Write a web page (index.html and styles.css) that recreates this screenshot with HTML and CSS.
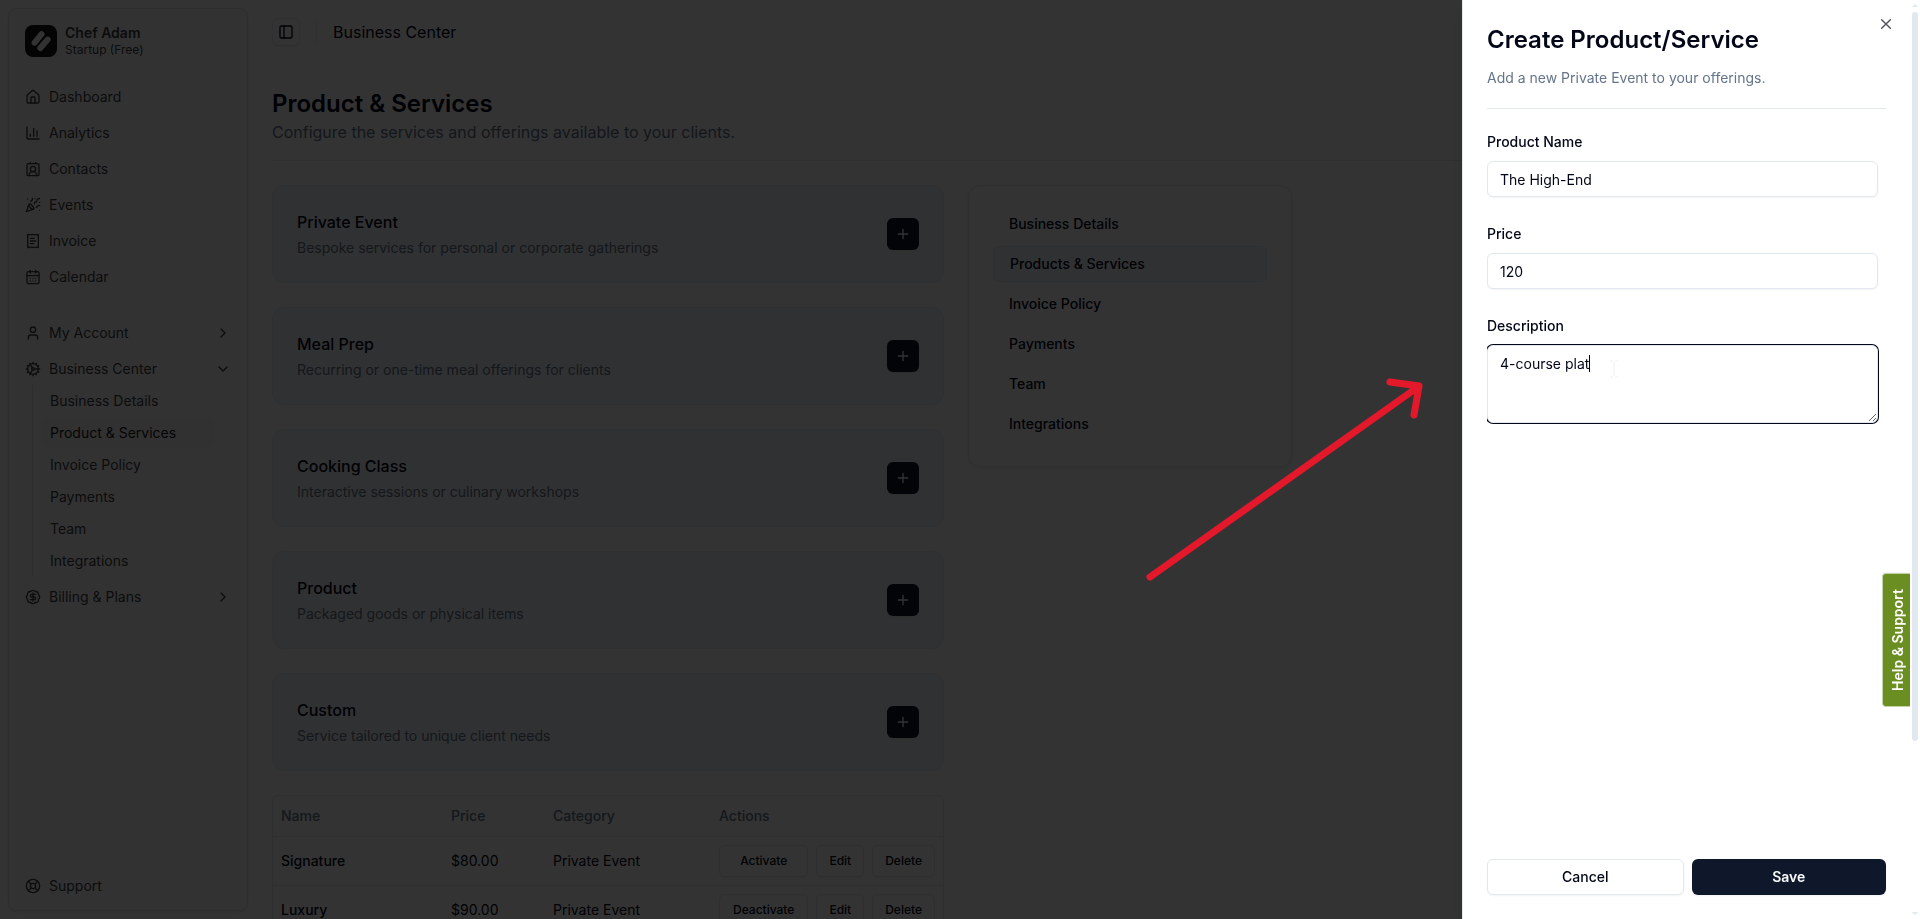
FILE: index.html
```html
<!DOCTYPE html>
<html lang="en">
<head>
    <meta charset="UTF-8">
    <meta name="viewport" content="width=device-width, initial-scale=1.0">
    <title>Business Center</title>
    <link rel="stylesheet" href="styles.css">
</head>
<body>

    <div class="app">
        <aside class="sidebar">
            <div class="brand">
                <svg class="logo" viewBox="0 0 32 32">
                    <rect width="32" height="32" rx="8" fill="#18181b"/>
                    <path d="M9.6 17.6 16.6 9.2M15.3 23l7.3-8.4" stroke="#fafafa" stroke-width="6" stroke-linecap="round"/>
                </svg>
                <div>
                    <div class="brand-name">Chef Adam</div>
                    <div class="brand-plan">Startup (Free)</div>
                </div>
            </div>

            <ul class="menu">
                <li><a href="#">
                    <svg class="icon" viewBox="0 0 24 24"><path d="M15 21v-8a1 1 0 0 0-1-1h-4a1 1 0 0 0-1 1v8"/><path d="M3 10a2 2 0 0 1 .709-1.528l7-5.999a2 2 0 0 1 2.582 0l7 5.999A2 2 0 0 1 21 10v9a2 2 0 0 1-2 2H5a2 2 0 0 1-2-2z"/></svg>
                    <span>Dashboard</span>
                </a></li>
                <li><a href="#">
                    <svg class="icon" viewBox="0 0 24 24"><path d="M3 3v16a2 2 0 0 0 2 2h16M18 17V9M13 17V5M8 17v-3"/></svg>
                    <span>Analytics</span>
                </a></li>
                <li><a href="#">
                    <svg class="icon" viewBox="0 0 24 24"><path d="M16 2v2M8 2v2M17.915 22a6 6 0 0 0-12 0"/><circle cx="12" cy="12" r="4"/><rect x="3" y="4" width="18" height="18" rx="2"/></svg>
                    <span>Contacts</span>
                </a></li>
                <li><a href="#">
                    <svg class="icon" viewBox="0 0 24 24"><path d="M5.8 11.3 2 22l10.7-3.79M4 3h.01M22 8h.01M15 2h.01M22 20h.01"/><path d="m22 2-2.24.75a2.9 2.9 0 0 0-1.96 3.12c.1.86-.57 1.63-1.45 1.63h-.38c-.86 0-1.6.6-1.76 1.44L14 10"/><path d="m22 13-.82-.33c-.86-.34-1.82.2-1.98 1.11c-.11.7-.72 1.22-1.43 1.22H17"/><path d="m11 2 .33.82c.34.86-.2 1.82-1.11 1.98C9.52 4.9 9 5.52 9 6.23V7"/><path d="M11 13c1.93 1.93 2.83 4.17 2 5-.83.83-3.07-.07-5-2-1.93-1.93-2.83-4.17-2-5 .83-.83 3.07.07 5 2Z"/></svg>
                    <span>Events</span>
                </a></li>
                <li><a href="#">
                    <svg class="icon" viewBox="0 0 24 24"><path d="M4 2v20l2-1 2 1 2-1 2 1 2-1 2 1 2-1 2 1V2l-2 1-2-1-2 1-2-1-2 1-2-1-2 1Z"/><path d="M14 8H8M16 12H8M13 16H8"/></svg>
                    <span>Invoice</span>
                </a></li>
                <li><a href="#">
                    <svg class="icon" viewBox="0 0 24 24"><path d="M8 2v4M16 2v4M3 10h18M8 14h.01M12 14h.01M16 14h.01M8 18h.01M12 18h.01M16 18h.01"/><rect x="3" y="4" width="18" height="18" rx="2"/></svg>
                    <span>Calendar</span>
                </a></li>
            </ul>

            <ul class="menu">
                <li><a href="#">
                    <svg class="icon" viewBox="0 0 24 24"><path d="M19 21v-2a4 4 0 0 0-4-4H9a4 4 0 0 0-4 4v2"/><circle cx="12" cy="7" r="4"/></svg>
                    <span>My Account</span>
                    <svg class="icon chevron" viewBox="0 0 24 24"><path d="m9 18 6-6-6-6"/></svg>
                </a></li>
                <li>
                    <a href="#">
                        <svg class="icon" viewBox="0 0 24 24"><circle cx="12" cy="12" r="8"/><circle cx="12" cy="12" r="2"/><path d="M12 2v2M12 22v-2M17 20.66l-1-1.73M11 10.27 7 3.34M20.66 17l-1.73-1M3.34 7l1.73 1M14 12h8M2 12h2M20.66 7l-1.73 1M3.34 17l1.73-1M17 3.34l-1 1.73M11 13.73l-4 6.93"/></svg>
                        <span>Business Center</span>
                        <svg class="icon chevron" viewBox="0 0 24 24"><path d="m6 9 6 6 6-6"/></svg>
                    </a>
                    <ul class="sub">
                        <li><a href="#">Business Details</a></li>
                        <li><a href="#" class="active">Product &amp; Services</a></li>
                        <li><a href="#">Invoice Policy</a></li>
                        <li><a href="#">Payments</a></li>
                        <li><a href="#">Team</a></li>
                        <li><a href="#">Integrations</a></li>
                    </ul>
                </li>
                <li><a href="#">
                    <svg class="icon" viewBox="0 0 24 24"><path d="M3.85 8.62a4 4 0 0 1 4.78-4.77 4 4 0 0 1 6.74 0 4 4 0 0 1 4.78 4.78 4 4 0 0 1 0 6.74 4 4 0 0 1-4.77 4.78 4 4 0 0 1-6.75 0 4 4 0 0 1-4.78-4.77 4 4 0 0 1 0-6.76Z"/><path d="M16 8h-6a2 2 0 1 0 0 4h4a2 2 0 1 1 0 4H8M12 18V6"/></svg>
                    <span>Billing &amp; Plans</span>
                    <svg class="icon chevron" viewBox="0 0 24 24"><path d="m9 18 6-6-6-6"/></svg>
                </a></li>
            </ul>

            <ul class="menu menu-bottom">
                <li><a href="#">
                    <svg class="icon" viewBox="0 0 24 24"><circle cx="12" cy="12" r="10"/><circle cx="12" cy="12" r="4"/><path d="m4.93 4.93 4.24 4.24M14.83 9.17l4.24-4.24M14.83 14.83l4.24 4.24M9.17 14.83l-4.24 4.24"/></svg>
                    <span>Support</span>
                </a></li>
            </ul>
        </aside>

        <main class="main">
            <header class="topbar">
                <button type="button" class="toggle" aria-label="Toggle sidebar">
                    <svg class="icon" viewBox="0 0 24 24"><rect x="3" y="3" width="18" height="18" rx="2"/><path d="M9 3v18"/></svg>
                </button>
                <span class="divider"></span>
                <span>Business Center</span>
            </header>

            <div class="heading">
                <h1>Product &amp; Services</h1>
                <p>Configure the services and offerings available to your clients.</p>
            </div>

            <div class="content">
                <div class="products">
                    <section class="card">
                        <div>
                            <h2>Private Event</h2>
                            <p>Bespoke services for personal or corporate gatherings</p>
                        </div>
                        <button type="button" class="add" aria-label="Add private event"><svg class="icon" viewBox="0 0 24 24"><path d="M5 12h14M12 5v14"/></svg></button>
                    </section>
                    <section class="card">
                        <div>
                            <h2>Meal Prep</h2>
                            <p>Recurring or one-time meal offerings for clients</p>
                        </div>
                        <button type="button" class="add" aria-label="Add meal prep"><svg class="icon" viewBox="0 0 24 24"><path d="M5 12h14M12 5v14"/></svg></button>
                    </section>
                    <section class="card">
                        <div>
                            <h2>Cooking Class</h2>
                            <p>Interactive sessions or culinary workshops</p>
                        </div>
                        <button type="button" class="add" aria-label="Add cooking class"><svg class="icon" viewBox="0 0 24 24"><path d="M5 12h14M12 5v14"/></svg></button>
                    </section>
                    <section class="card">
                        <div>
                            <h2>Product</h2>
                            <p>Packaged goods or physical items</p>
                        </div>
                        <button type="button" class="add" aria-label="Add product"><svg class="icon" viewBox="0 0 24 24"><path d="M5 12h14M12 5v14"/></svg></button>
                    </section>
                    <section class="card">
                        <div>
                            <h2>Custom</h2>
                            <p>Service tailored to unique client needs</p>
                        </div>
                        <button type="button" class="add" aria-label="Add custom"><svg class="icon" viewBox="0 0 24 24"><path d="M5 12h14M12 5v14"/></svg></button>
                    </section>

                    <div class="table-box">
                        <table>
                            <thead>
                                <tr>
                                    <th class="col-name">Name</th>
                                    <th class="col-price">Price</th>
                                    <th>Category</th>
                                    <th class="col-actions">Actions</th>
                                </tr>
                            </thead>
                            <tbody>
                                <tr>
                                    <td class="name">Signature</td>
                                    <td>$80.00</td>
                                    <td>Private Event</td>
                                    <td>
                                        <div class="actions">
                                            <button type="button" class="wide">Activate</button>
                                            <button type="button">Edit</button>
                                            <button type="button">Delete</button>
                                        </div>
                                    </td>
                                </tr>
                                <tr>
                                    <td class="name">Luxury</td>
                                    <td>$90.00</td>
                                    <td>Private Event</td>
                                    <td>
                                        <div class="actions">
                                            <button type="button" class="wide">Deactivate</button>
                                            <button type="button">Edit</button>
                                            <button type="button">Delete</button>
                                        </div>
                                    </td>
                                </tr>
                            </tbody>
                        </table>
                    </div>
                </div>

                <nav class="side-nav">
                    <a href="#">Business Details</a>
                    <a href="#" class="active">Products &amp; Services</a>
                    <a href="#">Invoice Policy</a>
                    <a href="#">Payments</a>
                    <a href="#">Team</a>
                    <a href="#">Integrations</a>
                </nav>
            </div>
        </main>
    </div>

    <div class="overlay"></div>

    <svg class="arrow" viewBox="0 0 280 206">
        <path d="M5 201 273 11M245 6l29 4-5 29"/>
    </svg>

    <div class="sheet" role="dialog" aria-labelledby="sheet-title">
        <button type="button" class="close" aria-label="Close">
            <svg class="icon" viewBox="0 0 24 24"><path d="M18.5 5.5l-13 13M5.5 5.5l13 13"/></svg>
        </button>
        <div class="sheet-head">
            <h2 id="sheet-title">Create Product/Service</h2>
            <p>Add a new Private Event to your offerings.</p>
        </div>
        <form class="form">
            <div class="field">
                <label for="name">Product Name</label>
                <input type="text" id="name" value="The High-End">
            </div>
            <div class="field">
                <label for="price">Price</label>
                <input type="text" id="price" value="120">
            </div>
            <div class="field">
                <label for="description">Description</label>
                <textarea id="description" class="focused" rows="3">4-course plat</textarea>
                <span class="caret"></span>
                <svg class="pointer" viewBox="0 0 8 18"><path d="M0 1h3M5 1h3M0 17h3M5 17h3M4 2v14"/></svg>
            </div>
        </form>
        <div class="sheet-foot">
            <button type="button" class="cancel">Cancel</button>
            <button type="button" class="save">Save</button>
        </div>
    </div>

    <button type="button" class="help">Help &amp; Support</button>

    <div class="scrollbar">
        <span class="up"></span>
        <span class="thumb"></span>
        <span class="down"></span>
    </div>

</body>
</html>
```

FILE: styles.css
```css
*{
    box-sizing: border-box;
}
body{
    margin: 0;
    height: 100vh;
    overflow: hidden;
    font-family: Inter, "Liberation Sans", sans-serif;
    font-size: 14px;
    line-height: 20px;
    color: #020617;
    background-color: #fff;
}
h1, h2, p{
    margin: 0;
}
ul{
    list-style: none;
    margin: 0;
    padding: 0;
}
a{
    color: inherit;
    text-decoration: none;
}
button, input, textarea{
    font: inherit;
    color: inherit;
}
button{
    display: flex;
    align-items: center;
    justify-content: center;
    padding: 0;
    border: 1px solid #e2e8f0;
    border-radius: 6px;
    background-color: #fff;
    font-weight: 500;
    box-shadow: 0 1px 2px rgba(0, 0, 0, 0.05);
}
.icon{
    width: 16px;
    height: 16px;
    flex: none;
    fill: none;
    stroke: currentColor;
    stroke-width: 2;
    stroke-linecap: round;
    stroke-linejoin: round;
}

/* layout */
.app{
    display: flex;
    height: 100vh;
    padding: 0 26px 0 8px;
    gap: 24px;
}

/* sidebar */
.sidebar{
    flex: none;
    display: flex;
    flex-direction: column;
    gap: 24px;
    width: 240px;
    margin: 8px 0;
    padding: 8px;
    border: 1px solid #e5e7eb;
    border-radius: 8px;
    background-color: #fafafa;
    color: #3f3f46;
    box-shadow: 0 1px 3px rgba(0, 0, 0, 0.1);
}
.brand{
    display: flex;
    align-items: center;
    gap: 8px;
    height: 48px;
    margin-bottom: -8px;
    padding: 8px;
}
.logo{
    width: 32px;
    height: 32px;
}
.brand-name{
    line-height: 18px;
    font-weight: 600;
}
.brand-plan{
    font-size: 12px;
    line-height: 16px;
}
.menu{
    display: flex;
    flex-direction: column;
    gap: 4px;
}
.menu > li > a{
    display: flex;
    align-items: center;
    gap: 8px;
    height: 32px;
    padding: 0 8px;
}
.menu .chevron{
    margin-left: auto;
}
.menu-bottom{
    margin-top: auto;
}
.sub{
    display: flex;
    flex-direction: column;
    gap: 4px;
    margin: 0 24px 0 15px;
    padding: 2px 0 2px 9px;
    border-left: 1px solid #e5e7eb;
}
.sub a{
    display: block;
    padding: 4px 8px;
    border-radius: 6px;
}
.sub .active{
    background-color: #f4f4f5;
    color: #18181b;
}

/* main column */
.main{
    flex: 1;
    min-width: 0;
}
.topbar{
    display: flex;
    align-items: center;
    gap: 16px;
    height: 64px;
    font-size: 16px;
}
.toggle{
    width: 28px;
    height: 28px;
}
.divider{
    width: 1px;
    height: 24px;
    background-color: #e2e8f0;
}
.heading{
    padding: 24px 0 16px;
    border-bottom: 1px solid #e2e8f0;
}
.heading h1{
    font-size: 24px;
    line-height: 32px;
    font-weight: 600;
}
.heading p{
    font-size: 16px;
    line-height: 24px;
    color: #64748b;
}
.content{
    display: grid;
    grid-template-columns: 1fr 324px;
    align-items: start;
    gap: 24px;
    max-width: 1020px;
    padding-top: 24px;
}
.products{
    display: flex;
    flex-direction: column;
    gap: 24px;
}
.card{
    display: flex;
    align-items: center;
    justify-content: space-between;
    padding: 24px;
    border: 1px solid #e2e8f0;
    border-radius: 12px;
    background-color: #f1f5f9;
}
.card h2{
    margin-bottom: 4px;
    font-size: 16px;
    line-height: 24px;
    font-weight: 500;
}
.card p{
    color: #64748b;
}
.add{
    width: 32px;
    height: 32px;
    border: 0;
    background-color: #0f172a;
    color: #f8fafc;
}

/* product table */
.table-box{
    border: 1px solid #e2e8f0;
    border-radius: 6px;
}
table{
    width: 100%;
    border-spacing: 0;
    table-layout: fixed;
}
th, td{
    padding: 8px;
    border-bottom: 1px solid #e2e8f0;
    text-align: left;
}
th{
    height: 41px;
    color: #64748b;
    font-weight: 500;
}
.col-name{
    width: 170px;
}
.col-price{
    width: 102px;
}
.col-actions{
    width: 232px;
}
.name{
    font-weight: 500;
}
.actions{
    display: flex;
    gap: 8px;
}
.actions button{
    height: 32px;
    padding: 0 12px;
    font-size: 12px;
}
.actions .wide{
    width: 90px;
}

/* right navigation */
.side-nav{
    display: flex;
    flex-direction: column;
    gap: 4px;
    padding: 20px 24px 24px;
    border: 1px solid #e2e8f0;
    border-radius: 12px;
    box-shadow: 0 1px 3px rgba(0, 0, 0, 0.1);
}
.side-nav a{
    padding: 8px 16px;
    font-weight: 500;
}
.side-nav .active{
    padding: 7px 16px;
    border: 1px solid #e2e8f0;
    border-radius: 6px;
    background-color: #f1f5f9;
}

.overlay{
    position: fixed;
    inset: 0;
    background-color: rgba(0, 0, 0, 0.8);
}
.arrow{
    position: fixed;
    left: 1145px;
    top: 376px;
    width: 280px;
    height: 206px;
    fill: none;
    stroke: #e4182b;
    stroke-width: 7;
    stroke-linecap: round;
    stroke-linejoin: round;
}

/* sheet */
.sheet{
    position: fixed;
    top: 0;
    right: 10px;
    bottom: 0;
    display: flex;
    flex-direction: column;
    width: 448px;
    padding: 24px;
    border-left: 1px solid #e2e8f0;
    background-color: #fff;
    box-shadow: 0 10px 15px rgba(0, 0, 0, 0.1);
}
.close{
    position: absolute;
    top: 16px;
    right: 16px;
    border: 0;
    opacity: 0.7;
    box-shadow: none;
}
.sheet-head{
    padding-bottom: 20px;
    border-bottom: 1px solid #e2e8f0;
}
.sheet-head h2{
    margin-bottom: 12px;
    font-size: 24px;
    line-height: 32px;
    font-weight: 600;
}
.sheet-head p{
    color: #64748b;
}
.form{
    flex: 1;
    display: flex;
    flex-direction: column;
    gap: 30px;
    padding: 26px 8px 0 0;
    overflow: hidden;
}
.field{
    position: relative;
    display: flex;
    flex-direction: column;
    gap: 12px;
}
.field label{
    line-height: 14px;
    font-weight: 500;
}
.field input{
    height: 36px;
    padding: 0 12px;
}
.field textarea{
    padding: 8px 12px;
}
.field input, .field textarea{
    width: 100%;
    border: 1px solid #e2e8f0;
    border-radius: 6px;
    background-color: #fff;
    outline: none;
    box-shadow: 0 1px 2px rgba(0, 0, 0, 0.05);
}
.field .focused{
    box-shadow: 0 0 0 1px #020617;
}
.caret{
    position: absolute;
    left: 102px;
    top: 36px;
    width: 1px;
    height: 17px;
    background-color: #000;
}
.pointer{
    position: absolute;
    left: 123px;
    top: 41px;
    width: 8px;
    height: 18px;
    fill: none;
    stroke: #f0f0f0;
}
.sheet-foot{
    display: flex;
    gap: 8px;
}
.sheet-foot button{
    flex: 1;
    height: 36px;
    padding: 0 16px;
}
.sheet-foot .save{
    border: 0;
    background-color: #0f172a;
    color: #f8fafc;
    font-weight: 600;
}

/* turned half round so that the label reads upwards */
.help{
    position: fixed;
    right: 10px;
    top: 573px;
    width: 28px;
    height: 134px;
    padding-right: 2px;
    border: 1px solid #c4d2a7;
    border-left: 0;
    border-radius: 0 4px 4px 0;
    background-color: #6b8e23;
    color: #fff;
    font-weight: 600;
    writing-mode: vertical-rl;
    transform: rotate(180deg);
}

/* page scrollbar */
.scrollbar{
    position: fixed;
    top: 0;
    right: 0;
    bottom: 0;
    width: 10px;
    display: flex;
    flex-direction: column;
    align-items: center;
    padding: 4px 0;
    background-color: #fff;
}
.up, .down{
    border: 3px solid transparent;
}
.up{
    border-top: 0;
    border-bottom-color: #e2e8f0;
    margin-bottom: 5px;
}
.down{
    margin-top: auto;
    border-bottom: 0;
    border-top-color: #e2e8f0;
}
.thumb{
    width: 6px;
    height: 80%;
    border-radius: 3px;
    background-color: #e2e8f0;
}
```
